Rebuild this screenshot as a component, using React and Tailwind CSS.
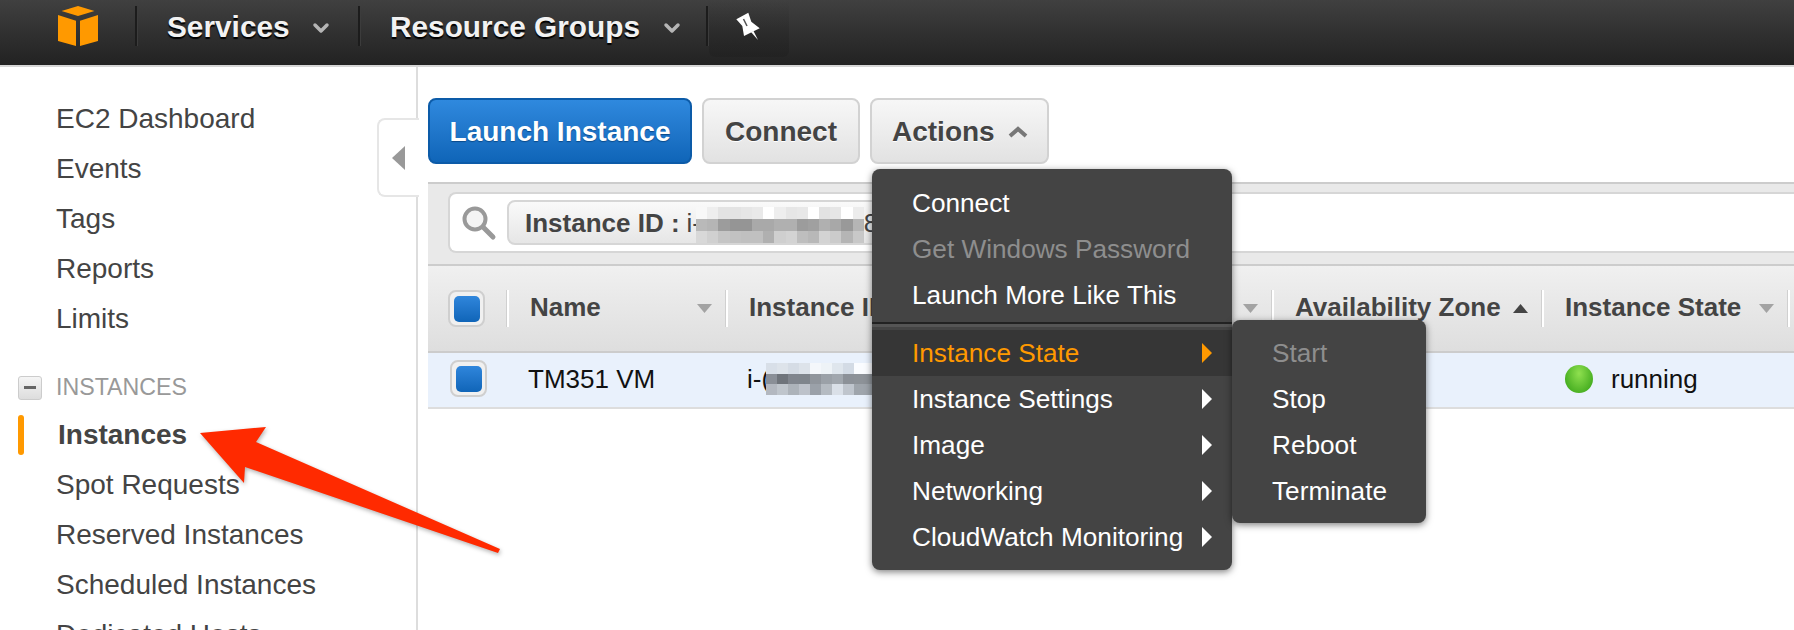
import { ChevronDown } from 'lucide-react';

const sidebarTop = ['EC2 Dashboard', 'Events', 'Tags', 'Reports', 'Limits'];
const sidebarInstances = ['Spot Requests', 'Reserved Instances', 'Scheduled Instances', 'Dedicated Hosts'];

const searchMosaic = [
  ['#f8f8f8', '#eeeeee', '#e3e3e3', '#e3e3e3', '#e6e6e6', '#e9e9e9', '#ffffff', '#eeeeee', '#e6e6e6', '#e8e8e8', '#ffffff', '#e2e2e2', '#e6e6e6', '#ffffff', '#ececec'],
  ['#b9b9b9', '#b5b5b5', '#9c9c9c', '#959595', '#959595', '#a9a9a9', '#a9a9a9', '#b0b0b0', '#b0b0b0', '#9c9c9c', '#a0a0a0', '#b0b0b0', '#a8a8a8', '#999999', '#b5b5b5'],
  ['#d8d8d8', '#d0d0d0', '#c5c5c5', '#c2c2c2', '#c0c0c0', '#c0c0c0', '#b0b0b0', '#cfcfcf', '#d3d3d3', '#bebebe', '#b8b8b8', '#d3d3d3', '#cbcbcb', '#b5b5b5', '#c8c8c8'],
];

const rowMosaic = [
  ['#d8dfe8', '#dde3ea', '#d5dce5', '#dde3ea', '#f4f7fb', '#eef3f7', '#dfe6ed', '#d3dbe5', '#fafcff', '#fafcff'],
  ['#8a8f97', '#6f747b', '#80858d', '#7f858c', '#90959c', '#9ba1a8', '#a1a7ae', '#8c9198', '#8d9298', '#8d9298'],
  ['#b3b8c0', '#bfc5cc', '#adb3ba', '#bdc2ca', '#9ba1a9', '#b5bbc2', '#dae0e8', '#bfc5cd', '#9fa5ac', '#9fa5ac'],
];

function Mosaic({ rows, cell, rowHeight }) {
  return (
    <div className="relative flex shrink-0 flex-col">
      {rows.map((row, i) => (
        <div key={i} className="flex">
          {row.map((color, j) => (
            <div key={j} style={{ width: cell, height: rowHeight, background: color }} />
          ))}
        </div>
      ))}
    </div>
  );
}

function SortArrow({ up, dark }) {
  return (
    <svg width="15" height="9" viewBox="0 0 15 9" className="shrink-0">
      <polygon points={up ? '0,9 15,9 7.5,0' : '0,0 15,0 7.5,9'} fill={dark ? '#444444' : '#a3a3a3'} />
    </svg>
  );
}

function Checkbox() {
  return (
    <div className="flex h-[37px] w-[37px] shrink-0 items-center justify-center rounded-lg border-2 border-[#cfcfcf] bg-[#f0f0f0]">
      <div className="h-[26px] w-[26px] rounded-[5px] bg-linear-to-b from-[#2f86dc] to-[#0f65b8]" />
    </div>
  );
}

function HeaderCol({ width, label, sort }) {
  return (
    <div className={`flex h-[37px] shrink-0 items-center justify-between border-l-2 border-white pl-[21px] pr-[14px] text-[26px] font-bold text-[#444] shadow-[-1px_0_0_#d0d0d0] ${width}`}>
      <span className="pb-[3px] whitespace-nowrap">{label}</span>
      {sort}
    </div>
  );
}

function NavSep() {
  return <div className="h-10 w-[3px] shrink-0 border-l-2 border-[#1c1c1c] bg-[#3c3c3c]" />;
}

function NavItem({ label, className }) {
  return (
    <div className={`flex items-center pt-[2px] ${className}`}>
      <span className="whitespace-nowrap text-[29.8px] leading-none font-bold text-[#f2f2f2] [text-shadow:0_2px_1px_#000]">{label}</span>
    </div>
  );
}

function MenuItem({ label, disabled, active, arrow }) {
  const color = disabled ? 'text-[#8e8e8e]' : active ? 'text-[#ff9900]' : 'text-white';
  return (
    <div className={`relative flex h-[46px] items-center pl-10 pt-[2px] text-[26.2px] whitespace-nowrap ${color} ${active ? 'bg-[#363636]' : ''}`}>
      {label}
      {arrow && (
        <svg width="10" height="20" viewBox="0 0 10 20" className="absolute left-[330px] top-[13px]">
          <polygon points="0,0 10,10 0,20" fill={active ? '#ff9900' : '#ffffff'} />
        </svg>
      )}
    </div>
  );
}

export default function App() {
  return (
    <div className="relative h-[630px] w-[1794px] overflow-hidden bg-white font-['Liberation_Sans',Arial,sans-serif]">
      {/* Top bar */}
      <header className="flex h-[67px] items-start border-b-2 border-[#d6d6d6] bg-linear-to-b from-[#404040] to-[#222222]">
        <div className="flex h-[52px] items-center pl-[58px]">
          <svg width="40" height="40" viewBox="0 0 40 40" className="shrink-0">
            <polygon points="3.5,5 20,0 36.5,5 20,10" fill="#ff9900" />
            <polygon points="0,9 18,14.7 18,40 0,35" fill="#ff9900" />
            <polygon points="22,14.7 40,9 40,35 22,40" fill="#ff9900" />
          </svg>
          <div className="w-[37px] shrink-0" />
          <NavSep />
          <NavItem label="Services" className="w-[177px] pl-[29px]" />
          <ChevronDown size={24} strokeWidth={3.5} className="ml-[-6px] mt-[3px] shrink-0 text-[#b5b5b5]" />
          <div className="w-[25px] shrink-0" />
          <NavSep />
          <NavItem label="Resource Groups" className="w-[303px] pl-[29px]" />
          <ChevronDown size={24} strokeWidth={3.5} className="ml-[-4px] mt-[3px] shrink-0 text-[#b5b5b5]" />
          <div className="w-[22px] shrink-0" />
          <NavSep />
        </div>
        <div className="h-[57px] w-20 rounded-b-md bg-linear-to-b from-transparent to-[#1f1f1f]/50 pl-[25px] pt-[10px]">
          <svg width="28" height="32" viewBox="0 0 28 32">
            <polygon points="2.3,9.3 14.3,2.7 17.3,11.7 25.7,18.3 10,26 8.3,16" fill="#ffffff" />
            <polygon points="17,22 19.5,21 24,30" fill="#ffffff" />
            <line x1="9.5" y1="9" x2="13" y2="16" stroke="#555555" strokeWidth="1.5" />
          </svg>
        </div>
      </header>

      <div className="flex h-[563px]">
        {/* Sidebar */}
        <aside className="h-full w-[418px] shrink-0 border-r-2 border-[#dddddd] pt-[27px] text-[28px] text-[#444]">
          {sidebarTop.map(label => (
            <div key={label} className="flex h-[50px] items-center pl-[56px]">{label}</div>
          ))}
          <div className="mt-[21px] flex h-[45px] items-center">
            <div className="ml-[18px] flex h-6 w-6 items-center justify-center rounded-[3px] border border-[#cccccc] bg-linear-to-b from-[#f5f5f5] to-[#dddddd]">
              <div className="h-[3px] w-3 bg-[#666666]" />
            </div>
            <span className="ml-[14px] text-[23.2px] text-[#999999]">INSTANCES</span>
          </div>
          <div className="flex h-[50px] items-center">
            <div className="ml-[18px] h-10 w-[6px] rounded-[3px] bg-[#ff9900]" />
            <span className="ml-[34px] text-[28px] font-bold">Instances</span>
          </div>
          {sidebarInstances.map(label => (
            <div key={label} className="flex h-[50px] items-center pl-[56px] whitespace-nowrap">{label}</div>
          ))}
        </aside>

        {/* Main content */}
        <main className="min-w-0 flex-1 overflow-hidden pl-[10px] pt-[31px]">
          <div className="flex h-[66px] items-stretch text-[28px] font-bold">
            <button className="w-[264px] rounded-lg border-2 border-[#0c5ba8] bg-linear-to-b from-[#2f89de] to-[#0f65b8] pt-[2px] text-white [text-shadow:0_1px_1px_#0a4a8a]">
              Launch Instance
            </button>
            <button className="ml-[10px] w-[158px] rounded-lg border-2 border-[#d2d2d2] bg-linear-to-b from-[#f7f7f7] to-[#e2e2e2] pt-[2px] text-[#444] [text-shadow:0_1px_0_#fff]">
              Connect
            </button>
            <button className="ml-[10px] flex w-[179px] items-center rounded-lg border-2 border-[#d2d2d2] bg-linear-to-b from-[#f7f7f7] to-[#e2e2e2] pl-[20px] pt-[2px] text-[#444] [text-shadow:0_1px_0_#fff]">
              Actions
              <svg width="20" height="12" viewBox="0 0 20 12" className="ml-[13px]">
                <polyline points="2,10 10,3 18,10" fill="none" stroke="#777777" strokeWidth="4" />
              </svg>
            </button>
          </div>

          {/* Search band */}
          <div className="mt-[18px] h-[84px] border-y-2 border-[#cccccc] bg-[#e9e9e9] pt-2">
            <div className="ml-5 flex h-[61px] items-center overflow-hidden rounded-l-lg border-2 border-r-0 border-[#d6d6d6] bg-white">
              <svg width="36" height="36" viewBox="0 0 36 36" className="ml-[11px] shrink-0">
                <circle cx="14" cy="14" r="10.5" fill="#f4f4f4" stroke="#999999" strokeWidth="4" />
                <line x1="22" y1="22" x2="32" y2="32" stroke="#999999" strokeWidth="5" strokeLinecap="round" />
              </svg>
              <div className="ml-[10px] flex h-[45px] w-[500px] shrink-0 items-center rounded-lg border-2 border-[#d6d6d6] bg-linear-to-b from-[#fafafa] to-[#e6e6e6] pl-4 text-[26px] whitespace-nowrap text-[#444]">
                <span className="pt-[2px] font-bold">Instance ID : </span>
                <span className="ml-[7px] pt-[2px]">i-</span>
                <div className="ml-[-5px] mt-[4px]">
                  <Mosaic rows={searchMosaic} cell={11.2} rowHeight={12} />
                </div>
                <span className="pt-[2px]">8</span>
              </div>
            </div>
          </div>

          {/* Table header */}
          <div className="flex h-[87px] items-center border-b-2 border-[#cccccc] bg-linear-to-b from-[#f0f0f0] to-[#dedede]">
            <div className="flex w-[79px] shrink-0 pl-5"><Checkbox /></div>
            <HeaderCol width="w-[219px]" label="Name" sort={<SortArrow />} />
            <HeaderCol width="w-[546px]" label="Instance ID" sort={<SortArrow />} />
            <HeaderCol width="w-[270px]" label="Availability Zone" sort={<SortArrow up dark />} />
            <HeaderCol width="w-[246px]" label="Instance State" sort={<SortArrow />} />
            <div className="h-[37px] w-[13px] shrink-0 border-l-2 border-white shadow-[-1px_0_0_#d0d0d0]" />
          </div>

          {/* Table row */}
          <div className="flex h-[56px] items-center border-b-2 border-[#dddddd] bg-[#e9f1fc] pb-[2px] text-[26px] text-[#111]">
            <div className="flex w-[100px] shrink-0 pl-[22px]"><div className="mt-[-1px]"><Checkbox /></div></div>
            <div className="w-[219px] shrink-0 whitespace-nowrap">TM351 VM</div>
            <div className="flex w-[818px] shrink-0 items-center whitespace-nowrap">
              i-(
              <div className="ml-[-4px]">
                <Mosaic rows={rowMosaic} cell={11} rowHeight={10.5} />
              </div>
            </div>
            <div className="h-7 w-7 shrink-0 rounded-full bg-radial-[at_50%_30%] from-[#8fe04f] to-[#2f9e12]" />
            <div className="ml-[18px]">running</div>
          </div>
        </main>
      </div>

      {/* Sidebar collapse tab */}
      <div className="absolute left-[377px] top-[118px] flex h-[79px] w-[42px] items-center rounded-l-lg border-2 border-r-0 border-[#e6e6e6] bg-white pl-[13px]">
        <svg width="13" height="24" viewBox="0 0 13 24">
          <polygon points="13,0 13,24 0,12" fill="#999999" />
        </svg>
      </div>

      {/* Actions menu */}
      <div className="absolute left-[872px] top-[169px] h-[401px] w-[360px] rounded-lg bg-[#444444] pt-[11px] shadow-[0_2px_7px_rgba(0,0,0,0.5)]">
        <MenuItem label="Connect" />
        <MenuItem label="Get Windows Password" disabled />
        <MenuItem label="Launch More Like This" />
        <div className="h-3 pt-1">
          <div className="h-[2px] bg-[#222222]" />
          <div className="h-[3px] bg-[#555555]" />
        </div>
        <MenuItem label="Instance State" active arrow />
        <MenuItem label="Instance Settings" arrow />
        <MenuItem label="Image" arrow />
        <MenuItem label="Networking" arrow />
        <MenuItem label="CloudWatch Monitoring" arrow />
      </div>

      {/* Instance State submenu */}
      <div className="absolute left-[1232px] top-[320px] h-[203px] w-[194px] rounded-lg bg-[#444444] pt-[10px] shadow-[0_2px_7px_rgba(0,0,0,0.5)]">
        <MenuItem label="Start" disabled />
        <MenuItem label="Stop" />
        <MenuItem label="Reboot" />
        <MenuItem label="Terminate" />
      </div>

      {/* Red annotation arrow */}
      <svg width="520" height="200" viewBox="0 0 520 200" className="absolute left-0 top-[400px] drop-shadow-[1px_2px_2px_rgba(0,0,0,0.3)]">
        <polygon points="200,33 266,27 256,42 500,149 498,153 245,67 244,83" fill="#ff2a00" />
      </svg>
    </div>
  );
}
